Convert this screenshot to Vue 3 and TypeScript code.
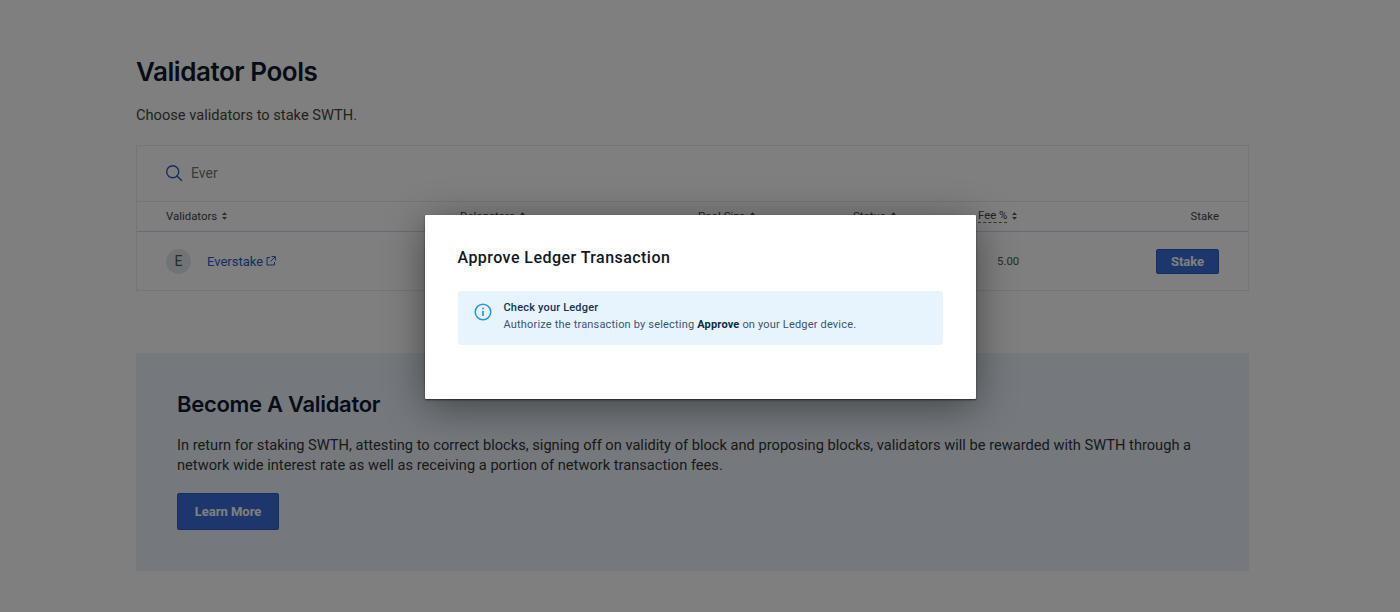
<script setup lang="ts">
type Column = {
  label: string
  sortable: boolean
  tip?: boolean
}

const columns: Column[] = [
  { label: 'Validators', sortable: true },
  { label: 'Delegators', sortable: true },
  { label: 'Pool Size', sortable: true },
  { label: 'Status', sortable: true },
  { label: 'Fee %', sortable: true, tip: true },
  { label: 'Stake', sortable: false },
]
</script>

<template>
  <div class="page">
    <main class="content">
      <h1>Validator Pools</h1>
      <p class="lead">Choose validators to stake SWTH.</p>

      <section class="card">
        <div class="search">
          <svg width="18" height="18" viewBox="0 0 18 18" fill="none" stroke="#2a5bc4" stroke-width="1.4">
            <circle cx="7.7" cy="7.7" r="6" />
            <path d="M12 12l4.6 4.6" stroke-linecap="round" />
          </svg>
          <span>Ever</span>
        </div>

        <div class="row head">
          <div v-for="col in columns" :key="col.label" class="cell">
            <span :class="{ tip: col.tip }">{{ col.label }}</span>
            <svg v-if="col.sortable" width="5" height="8" viewBox="0 0 6 9" fill="#555">
              <path d="M3 0l3 3.4H0zM3 9L0 5.6h6z" />
            </svg>
          </div>
        </div>

        <div class="row body">
          <div class="validator">
            <span class="avatar">E</span>
            <a class="name">Everstake</a>
            <svg width="10" height="10" viewBox="0 0 10 10" fill="none" stroke="#2a5bc4" stroke-width="1">
              <path d="M4 1.5H1v7.5h7.500V6M5.500 .6h3.900v3.900M9.200 .8L4.500 5.500" />
            </svg>
          </div>
          <div></div>
          <div></div>
          <div></div>
          <div class="fee">5.00</div>
          <div class="action"><button class="btn small">Stake</button></div>
        </div>
      </section>

      <section class="banner">
        <h2>Become A Validator</h2>
        <p>
          In return for staking SWTH, attesting to correct blocks, signing off on validity of block and proposing
          blocks, validators will be rewarded with SWTH through a network wide interest rate as well as receiving a
          portion of network transaction fees.
        </p>
        <button class="btn large">Learn More</button>
      </section>
    </main>

    <div class="overlay">
      <div class="modal">
        <h3>Approve Ledger Transaction</h3>
        <div class="alert">
          <svg width="18" height="18" viewBox="0 0 18 18" fill="none" stroke="#2196f3" stroke-width="1.5">
            <circle cx="9" cy="9" r="7.800" />
            <path d="M9 8v5" stroke-width="1.700" />
            <circle cx="9" cy="5.400" r=".9" fill="#2196f3" stroke="none" />
          </svg>
          <div>
            <div class="alert-title">Check your Ledger</div>
            <div class="alert-text">
              Authorize the transaction by selecting <b>Approve</b> on your Ledger device.
            </div>
          </div>
        </div>
      </div>
    </div>
  </div>
</template>

<style>
html,
body {
  margin: 0;
  background: #fff;
}
</style>

<style scoped>
.page {
  position: relative;
  height: 612px;
  overflow: hidden;
  background: #fff;
  font-family: Roboto, 'Liberation Sans', sans-serif;
  color: #1f2430;
}
.content {
  width: 1113px;
  margin-left: 136px;
  padding-top: 56px;
}
h1 {
  margin: 0;
  font: 600 26px/32px Inter, 'Liberation Sans', sans-serif;
  letter-spacing: -0.45px;
  color: #0f1a30;
}
.lead {
  margin: 17px 0 0;
  font-size: 14.65px;
  line-height: 20px;
  color: #444;
}
.card {
  margin-top: 20px;
  height: 146px;
  box-sizing: border-box;
  border: 1px solid #e6eaf2;
}
.search {
  display: flex;
  align-items: center;
  gap: 8px;
  height: 54px;
  padding: 0 0 1px 28px;
  border-bottom: 1px solid #e6eaf1;
  font-size: 14px;
  color: #777;
}
.row {
  display: grid;
  grid-template-columns: 294px 238px 155px 125px 1fr 130px;
  padding: 0 29px;
  align-items: center;
}
.head {
  height: 29px;
  border-bottom: 1px solid #ced8e8;
  font-size: 11.4px;
  color: #444;
}
.cell {
  display: flex;
  align-items: center;
  gap: 5px;
  margin-bottom: 2px;
}
.cell:last-child {
  justify-content: flex-end;
}
.tip {
  border-bottom: 1px dashed #666;
}
.body {
  height: 58px;
}
.validator {
  display: flex;
  align-items: center;
  font-size: 13px;
}
.avatar {
  display: flex;
  align-items: center;
  justify-content: center;
  width: 25px;
  height: 25px;
  margin-right: 16px;
  border-radius: 50%;
  background: #e3e8ef;
  color: #555;
  font-size: 14px;
}
.name {
  margin-right: 3px;
  color: #2a5bc4;
}
.fee {
  padding-left: 19px;
  font-size: 11.4px;
  color: #555;
}
.action {
  display: flex;
  justify-content: flex-end;
}
.btn {
  display: block;
  box-sizing: border-box;
  border: 1px solid #2a5bc4;
  border-radius: 2px;
  background: #3b6fd8;
  color: #fff;
  font-family: inherit;
  font-weight: 700;
}
.small {
  width: 63px;
  height: 25px;
  padding: 0;
  font-size: 13px;
}
.large {
  width: 102px;
  height: 37px;
  padding: 0;
  font-size: 13px;
}
.banner {
  margin-top: 62px;
  height: 218px;
  box-sizing: border-box;
  padding: 37px 41px 0;
  background: #ebf3fc;
}
h2 {
  margin: 0;
  font: 600 22px/28px Inter, 'Liberation Sans', sans-serif;
  letter-spacing: -0.3px;
  color: #0f1a30;
}
.banner p {
  margin: 17px 0 18px;
  font-size: 14.65px;
  line-height: 20px;
  color: #333;
}
.overlay {
  position: absolute;
  inset: 0;
  display: flex;
  align-items: center;
  justify-content: center;
  padding-top: 2px;
  background: rgba(0, 0, 0, 0.5);
}
.modal {
  width: 551px;
  height: 184px;
  box-sizing: border-box;
  padding: 32px 33px;
  background: #fff;
  box-shadow: 0 1px 2px rgba(0, 0, 0, 0.6), 0 8px 40px rgba(0, 0, 0, 0.45);
  border-radius: 1px;
}
h3 {
  margin: 0;
  font: 500 16px/21px Roboto, sans-serif;
  letter-spacing: 0.45px;
  color: #101828;
}
.alert {
  display: flex;
  align-items: flex-start;
  gap: 12px;
  height: 54px;
  box-sizing: border-box;
  margin-top: 23px;
  padding: 8px 0 0 16px;
  border-radius: 3px;
  background: #e8f4fd;
  font-size: 11px;
  line-height: 17px;
  letter-spacing: 0.18px;
  color: #3a5579;
}
.alert svg {
  margin-top: 4px;
}
.alert-title {
  color: #14335c;
  font-weight: 500;
}
.alert-text b {
  color: #0c2a52;
}
</style>
